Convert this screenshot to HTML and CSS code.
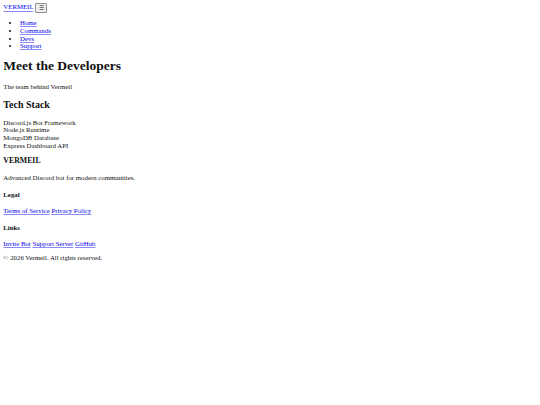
FILE: index.html
```html
<!DOCTYPE html>
<html lang="en">
<head>
    <meta charset="UTF-8">
    <meta name="viewport" content="width=device-width, initial-scale=1.0">
    <title>Devs - Vermeil</title>
    <link rel="stylesheet" href="styles.css">
</head>
<body>
    <nav class="navbar">
        <div class="nav-brand">
            <a href="/" class="logo">VERMEIL</a>
            <button class="menu-toggle">☰</button>
        </div>
        <ul class="nav-links">
            <li><a href="/">Home</a></li>
            <li><a href="/commands.html">Commands</a></li>
            <li><a href="/devs.html">Devs</a></li>
            <li><a href="/support.html">Support</a></li>
        </ul>
    </nav>

    <main>
        <section class="hero">
            <h1>Meet the Developers</h1>
            <p>The team behind Vermeil</p>
        </section>

        <section class="tech">
            <h2>Tech Stack</h2>
            <div class="tech-list">
                <div>Discord.js Bot Framework</div>
                <div>Node.js Runtime</div>
                <div>MongoDB Database</div>
                <div>Express Dashboard API</div>
            </div>
        </section>
    </main>

    <footer class="footer">
        <h3>VERMEIL</h3>
        <p>Advanced Discord bot for modern communities.</p>
        <h4>Legal</h4>
        <p><a href="/terms.html">Terms of Service</a> <a href="/privacy.html">Privacy Policy</a></p>
        <h4>Links</h4>
        <p><a href="#">Invite Bot</a> <a href="#">Support Server</a> <a href="#">GitHub</a></p>
        <p>&copy; 2026 Vermeil. All rights reserved.</p>
    </footer>
</body>
</html>
```

FILE: styles.css
```css
body {
    font-family: "Liberation Serif", serif;
    font-size: 6.8px;
    line-height: 7.667px;
    margin: 3.333px;
    color: #111;
    background: #fff;
}
a {
    color: #0000ee;
    text-decoration-color: rgba(0, 0, 238, 0.45);
}
p {
    margin: 6.667px 0;
}
.menu-toggle {
    font-family: "Liberation Sans", sans-serif;
    font-size: 5.6px;
    line-height: 6.4px;
    margin-left: 0.5px;
    padding: 0.417px 2.5px;
    border: 0.833px solid #8f8f8f;
    border-radius: 1px;
    background: #efefef;
    color: #000;
}
.nav-links {
    margin: 6.667px 0;
    padding-left: 16.667px;
}
h1 {
    font-size: 13.5px;
    line-height: 15.333px;
    margin: 8.6px 0 9.2px;
}
h2 {
    font-size: 10px;
    line-height: 11.5px;
    margin: 8.3px 0;
}
h3 {
    font-size: 7.8px;
    line-height: 8.96px;
    margin: 7.8px 0;
}
h4 {
    font-size: 6.8px;
    line-height: 7.667px;
    margin: 8.867px 0;
}
```
